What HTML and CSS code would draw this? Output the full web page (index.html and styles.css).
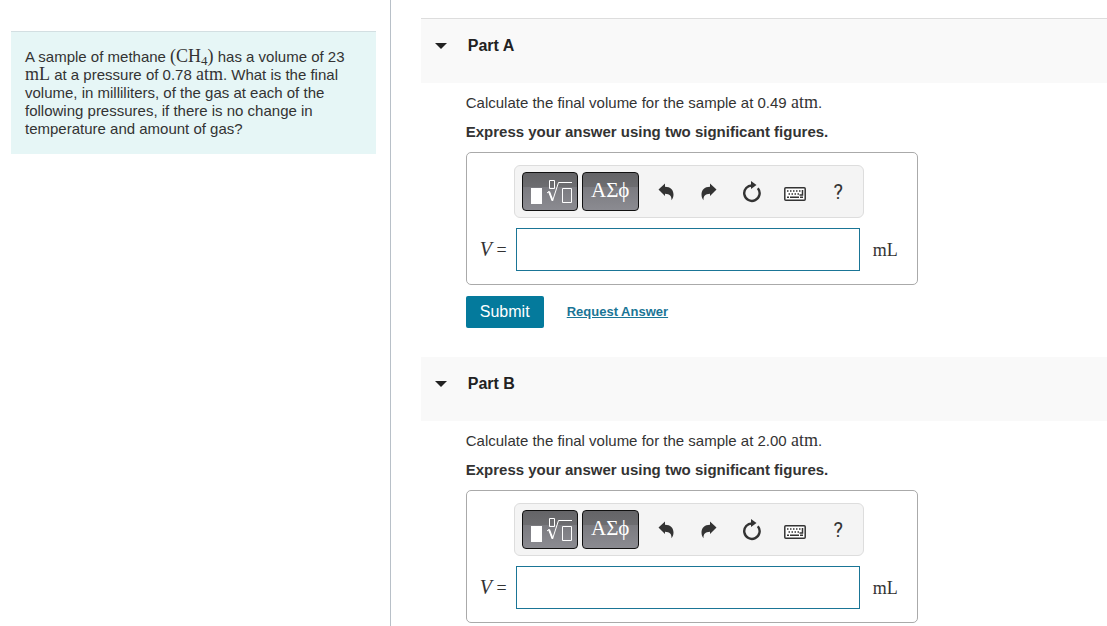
FILE: index.html
```
<!DOCTYPE html>
<html lang="en">
<head>
  <meta charset="UTF-8">
  <meta name="viewport" content="width=device-width, initial-scale=1.0">
  <title>Gas volume and pressure</title>
  <link rel="stylesheet" href="styles.css">
</head>
<body>

  <!-- Shared toolbar icons -->
  <svg class="sprite" aria-hidden="true">
    <symbol id="icon-template" viewBox="0 0 46 28">
      <rect x="4" y="10" width="11" height="16" fill="#fff"/>
      <g fill="none" stroke="#fff">
        <path d="M22.500 2.500h5v8h-5z"/>
        <path d="M20 15l2-1.500 3.500 9.500L31.500 4.500H45"/>
        <path d="M22 13.500l3.500 9" stroke-width="2"/>
        <path d="M35.500 10.500h9v14h-9z"/>
      </g>
    </symbol>
    <symbol id="icon-undo" viewBox="0 0 16 18">
      <path d="M0.500 6.500L7 0.500v3.200c5.500 0 8.500 3.300 8.500 7.800 0 2.300-.8 4.300-2 5.700.2-4.300-1.700-6.400-6.500-6.500V13z"/>
    </symbol>
    <symbol id="icon-redo" viewBox="0 0 16 18">
      <path d="M15.500 6.500L9 0.500v3.200C3.500 3.700.5 7 .5 11.500c0 2.300.8 4.300 2 5.700-.2-4.300 1.700-6.400 6.500-6.500V13z"/>
    </symbol>
    <symbol id="icon-reset" viewBox="0 0 20 22">
      <path d="M15.800 7.200A7.700 7.700 0 1 1 10.500 4.500" fill="none" stroke="#333" stroke-width="2.400"/>
      <path d="M9 0l5.500 4-5.500 4z"/>
    </symbol>
    <symbol id="icon-keyboard" viewBox="0 0 22 14">
      <rect x="0.800" y="0.800" width="20.400" height="12.400" rx="1" fill="#fff" stroke="#333" stroke-width="1.500"/>
      <g fill="none" stroke="#333" stroke-width="1.500">
        <path d="M3 4h14" stroke-dasharray="1.500 1.500"/>
        <path d="M4.500 7h12" stroke-dasharray="1.500 1.500"/>
        <path d="M3 10.200h2M6 10.200h9M16 10.200h3M18.500 3v5h-3"/>
      </g>
    </symbol>
  </svg>

  <div class="page">
    <aside class="sidebar">
      <div class="problem">
        A sample of methane <span class="math">(CH<sub>4</sub>)</span> has a volume of 23 <span class="math">mL</span> at a pressure of 0.78 <span class="math">atm</span>. What is the final volume, in milliliters, of the gas at each of the following pressures, if there is no change in temperature and amount of gas?
      </div>
    </aside>

    <main class="content">
      <section class="part">
        <h2 class="part-header"><button class="toggle" type="button" aria-expanded="true"><span class="caret"></span>Part A</button></h2>
        <div class="part-body">
          <p>Calculate the final volume for the sample at 0.49 <span class="math">atm</span>.</p>
          <p class="instructions">Express your answer using two significant figures.</p>
          <form class="answer">
            <div class="toolbar">
              <button class="palette" type="button" aria-label="Templates"><svg class="template"><use href="#icon-template"/></svg></button>
              <button class="palette greek" type="button">ΑΣϕ</button>
              <button class="tool" type="button" aria-label="Undo"><svg class="arrow"><use href="#icon-undo"/></svg></button>
              <button class="tool" type="button" aria-label="Redo"><svg class="arrow"><use href="#icon-redo"/></svg></button>
              <button class="tool" type="button" aria-label="Reset"><svg class="reset"><use href="#icon-reset"/></svg></button>
              <button class="tool" type="button" aria-label="Keyboard shortcuts"><svg class="keyboard"><use href="#icon-keyboard"/></svg></button>
              <button class="tool help" type="button">?</button>
            </div>
            <div class="entry">
              <label for="volume-a"><i>V</i> =</label>
              <input type="text" id="volume-a">
              <span class="unit">mL</span>
            </div>
          </form>
          <div class="actions">
            <button class="submit" type="button">Submit</button>
            <a class="request" href="#">Request Answer</a>
          </div>
        </div>
      </section>

      <section class="part">
        <h2 class="part-header"><button class="toggle" type="button" aria-expanded="true"><span class="caret"></span>Part B</button></h2>
        <div class="part-body">
          <p>Calculate the final volume for the sample at 2.00 <span class="math">atm</span>.</p>
          <p class="instructions">Express your answer using two significant figures.</p>
          <form class="answer">
            <div class="toolbar">
              <button class="palette" type="button" aria-label="Templates"><svg class="template"><use href="#icon-template"/></svg></button>
              <button class="palette greek" type="button">ΑΣϕ</button>
              <button class="tool" type="button" aria-label="Undo"><svg class="arrow"><use href="#icon-undo"/></svg></button>
              <button class="tool" type="button" aria-label="Redo"><svg class="arrow"><use href="#icon-redo"/></svg></button>
              <button class="tool" type="button" aria-label="Reset"><svg class="reset"><use href="#icon-reset"/></svg></button>
              <button class="tool" type="button" aria-label="Keyboard shortcuts"><svg class="keyboard"><use href="#icon-keyboard"/></svg></button>
              <button class="tool help" type="button">?</button>
            </div>
            <div class="entry">
              <label for="volume-b"><i>V</i> =</label>
              <input type="text" id="volume-b">
              <span class="unit">mL</span>
            </div>
          </form>
        </div>
      </section>
    </main>
  </div>

</body>
</html>
```
FILE: styles.css
```
* {
  box-sizing: border-box;
}
body {
  margin: 0;
  background: #fff;
  color: #333;
  font-family: "Liberation Sans", Arial, sans-serif;
  font-size: 15px;
  line-height: 18px;
}
.sprite {
  display: none;
}
.page {
  display: grid;
  grid-template-columns: 6fr 11fr;
  min-height: 100vh;
}
.sidebar {
  padding: 31px 14px 0 11px;
  border-right: 1px solid #b8c0c8;
}
.problem {
  padding: 16px 14px;
  border-top: 1px solid #d3dfe2;
  background: #e6f6f6;
}
.math {
  font-family: "Liberation Serif", serif;
  font-size: 18px;
  line-height: 0;
}
.math sub {
  font-size: 13px;
  vertical-align: -3px;
}
.content {
  padding: 18px 0 0 30px;
  min-width: 0;
}

/* Part sections */
.part + .part {
  margin-top: 28px;
}
.part-header {
  height: 65px;
  margin: 0;
  padding: 17px 14px;
  border-top: 1px solid #ddd;
  background: #f9f9f9;
}
.part + .part .part-header {
  border-top-color: #fff;
}
.toggle {
  display: flex;
  align-items: center;
  gap: 21px;
  padding: 0;
  border: 0;
  background: none;
  color: #222;
  font: bold 16px/20px "Liberation Sans", Arial, sans-serif;
}
.caret {
  border: 6px solid transparent;
  border-top-color: #222;
  border-bottom: 0;
}
.part-body {
  padding: 11px 14px 0 45px;
}
.part-body p {
  margin: 0 0 11px;
}
.part-body .instructions {
  font-weight: bold;
}

/* Answer box */
.answer {
  width: 100%;
  max-width: 452px;
  padding: 12px 0 13px;
  border: 1px solid #aaa;
  border-radius: 5px;
}
.toolbar {
  display: flex;
  align-items: center;
  height: 53px;
  margin: 0 53px 10px 47px;
  padding: 0 3px 0 7px;
  border: 1px solid #ddd;
  border-radius: 6px;
  background: #f4f4f4;
}
.palette {
  display: flex;
  align-items: center;
  justify-content: center;
  width: 56px;
  height: 39px;
  margin-right: 4px;
  padding: 0;
  border: 1px solid #111;
  border-radius: 4px;
  background: linear-gradient(#646467, #6d6d70 38%, #7b7b80 38%, #8b8b91);
  color: #fff;
}
.greek {
  width: 57px;
  margin-right: 6px;
  padding-bottom: 3px;
  font: 21px/24px "Liberation Serif", serif;
}
.tool {
  display: flex;
  flex: 1;
  align-items: center;
  justify-content: center;
  padding: 0;
  border: 0;
  background: none;
  color: #333;
  fill: #333;
}
.template {
  flex: none;
  width: 46px;
  height: 28px;
}
.arrow {
  width: 16px;
  height: 18px;
}
.reset {
  width: 20px;
  height: 22px;
}
.keyboard {
  width: 22px;
  height: 14px;
  margin-top: 4px;
}
.help {
  font: 20px/24px Roboto, sans-serif;
}
.entry {
  display: flex;
  align-items: center;
  font-family: "Liberation Serif", serif;
  font-size: 18px;
}
.entry label {
  width: 49px;
  padding-left: 13px;
}
.entry label i {
  font-size: 20px;
}
.entry input {
  flex: 1;
  min-width: 0;
  height: 43px;
  padding: 0 8px;
  border: 1px solid #1a7596;
  font-size: 18px;
}
.unit {
  width: 57px;
  padding-left: 13px;
}
.actions {
  display: flex;
  align-items: center;
  gap: 23px;
  margin-top: 11px;
}
.submit {
  width: 78px;
  height: 32px;
  padding: 0;
  border: 0;
  border-radius: 2px;
  background: #047a9c;
  color: #fff;
  font: 16px/18px "Liberation Sans", Arial, sans-serif;
}
.request {
  color: #1a7596;
  font-size: 13px;
  font-weight: bold;
}
button {
  cursor: pointer;
}
```
